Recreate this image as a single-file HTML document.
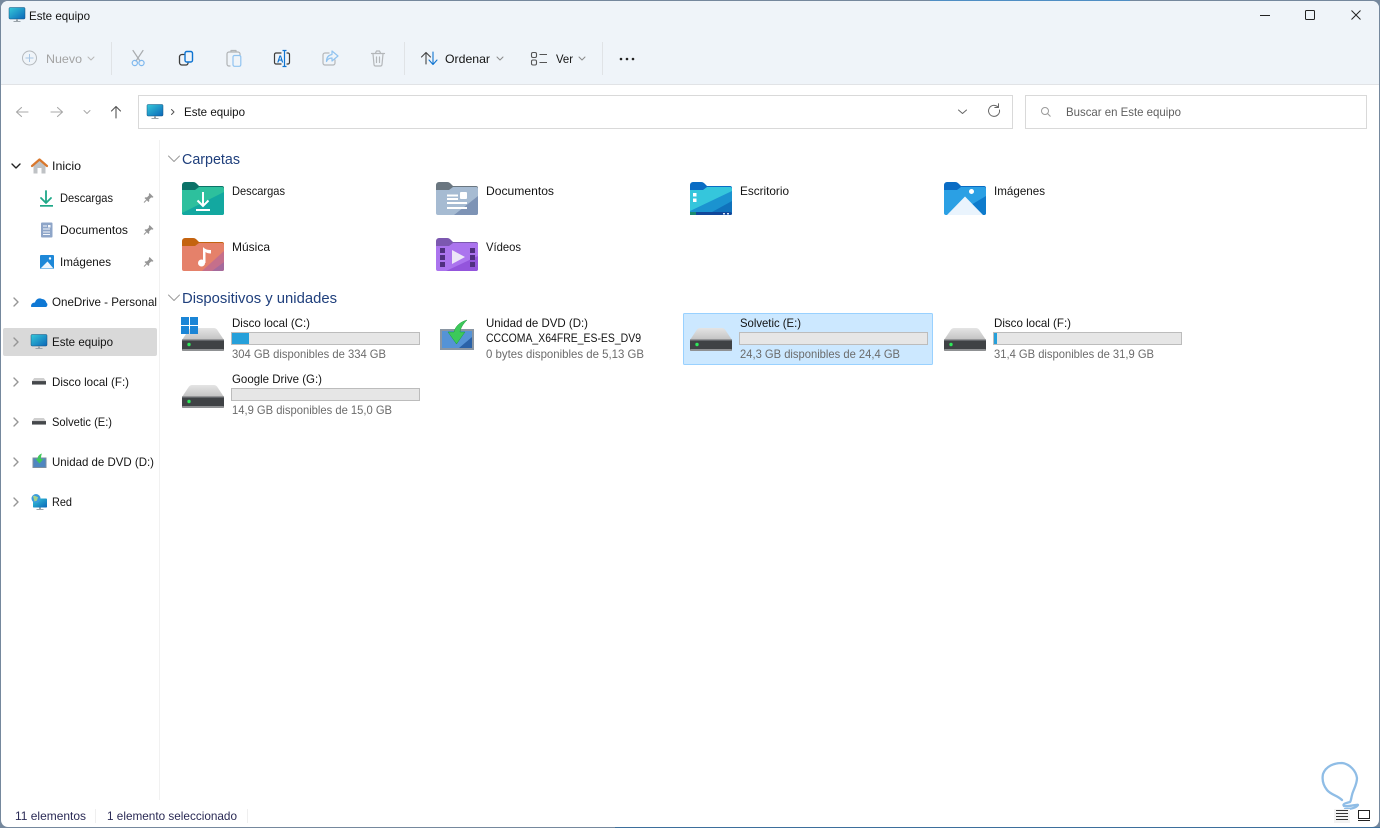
<!DOCTYPE html>
<html lang="es"><head><meta charset="utf-8"><title>Este equipo</title>
<style>
html,body{margin:0;padding:0;width:1380px;height:828px;overflow:hidden;background:#fff}
svg{display:block}
text{font-family:"Liberation Sans",sans-serif;font-size:12px;fill:#141414}
.s{fill:#6b6b6b}
.h{font-size:14.5px;fill:#1f3f7c}
.d{fill:#a3a3a3}
.i{fill:none;stroke-linecap:round;stroke-linejoin:round}
.bar{fill:#e6e6e6;stroke:#bcbcbc}
</style></head><body>
<svg xmlns="http://www.w3.org/2000/svg" width="1380" height="828" viewBox="0 0 1380 828">
<defs>
<linearGradient id="mon" x1="0" y1="0" x2="1" y2="1"><stop offset="0" stop-color="#35c9d9"/><stop offset="1" stop-color="#0b66b8"/></linearGradient>
<linearGradient id="top" x1="0" y1="0" x2="0" y2="1"><stop offset="0" stop-color="#e4e4e4"/><stop offset="1" stop-color="#c2c2c2"/></linearGradient>
<symbol id="monitor" viewBox="0 0 16 16" overflow="visible">
<rect x="0" y="0.5" width="16" height="11.5" rx="1" fill="url(#mon)" stroke="#17517f" stroke-width=".5"/>
<rect x="7" y="12" width="2" height="2.5" fill="#9aa3aa"/><rect x="4.5" y="14" width="7" height="1" fill="#9aa3aa"/>
</symbol>
<symbol id="drive" viewBox="0 0 42 23" overflow="visible">
<path d="M7 1.5C8 .5 9 0 10 0H32C33 0 34 .5 35 1.5L42 12H0Z" fill="url(#top)"/>
<rect x="0" y="11.500" width="42" height="11.500" rx="1.500" fill="#3f4245"/>
<rect x="0" y="11.500" width="42" height="1.500" fill="#63666a"/>
<rect x="0" y="21" width="42" height="2" rx="1" fill="#8f9193"/>
<circle cx="7" cy="16.500" r="1.700" fill="#2ee85a"/>
</symbol>
<symbol id="minidrive" viewBox="0 0 16 8" overflow="visible">
<path d="M2.500 0H13.500L16 3.500H0Z" fill="#cfcfcf"/><rect x="0" y="3.500" width="16" height="4" fill="#45484b"/>
</symbol>
<symbol id="chevR" viewBox="0 0 8 12" overflow="visible"><path class="i" d="M2 2L6 6L2 10" stroke="#969696" stroke-width="1.400"/></symbol>
<symbol id="pin" viewBox="0 0 10 10" overflow="visible">
<path d="M6 0L10 4L8.800 4.700L7.700 4.400L5.600 6.500L5.800 8L5 9L1 5L2 4.200L3.500 4.400L5.600 2.300L5.300 1.200Z" fill="#969696"/>
<path d="M3 7L.5 9.500" stroke="#969696"/>
</symbol>
</defs>

<!-- frame -->
<rect width="1380" height="828" fill="#75889d"/>
<rect x="930" y="0" width="200" height="1" fill="#4f8ec4"/>
<rect x="1" y="1" width="1378" height="826" rx="7" fill="#fff"/>
<path d="M1 84V8a7 7 0 0 1 7-7H1372a7 7 0 0 1 7 7V84Z" fill="#eff4f9"/>
<rect x="1" y="84" width="1378" height="1" fill="#e1e3e6"/>
<rect x="615" y="827" width="765" height="1" fill="#3d6f9c"/>

<!-- title -->
<use href="#monitor" x="9" y="7" width="16" height="16"/>
<text x="29" y="20" textLength="61" lengthAdjust="spacingAndGlyphs">Este equipo</text>
<path d="M1260 15.500H1270" stroke="#222" stroke-width="1"/>
<rect x="1305.500" y="10.500" width="9" height="9" rx="1" fill="none" stroke="#222"/>
<path d="M1351.500 10.500L1360.500 19.500M1360.500 10.500L1351.500 19.500" stroke="#222"/>

<!-- toolbar -->
<circle cx="29.500" cy="58" r="7" fill="none" stroke="#b4b8bc"/>
<path d="M29.500 54V62M25.500 58H33.500" stroke="#a9c6e4"/>
<text x="46" y="63" class="d" textLength="36" lengthAdjust="spacingAndGlyphs">Nuevo</text>
<path class="i" d="M88 57L91 60L94 57" stroke="#b8b8b8"/>
<rect x="111" y="42" width="1" height="33" fill="#e0e3e6"/>
<!-- cut -->
<path class="i" d="M133 50.500L140 61M143 50.500L136 61" stroke="#a9acaf" stroke-width="1.200"/>
<circle cx="134.800" cy="63" r="2.600" fill="none" stroke="#7fb8ee" stroke-width="1.200"/>
<circle cx="141.500" cy="63" r="2.600" fill="none" stroke="#7fb8ee" stroke-width="1.200"/>
<!-- copy -->
<path class="i" d="M184 54.500H182a2.500 2.500 0 0 0-2.500 2.500V62.500a2.500 2.500 0 0 0 2.500 2.500H186a2 2 0 0 0 2-2" stroke="#3c3c3c" stroke-width="1.300"/>
<rect x="185" y="51.500" width="7.500" height="10.500" rx="1.800" fill="#eff4f9" stroke="#0f74d1" stroke-width="1.400"/>
<!-- paste -->
<path class="i" d="M230 66H229a2 2 0 0 1-2-2V54a2 2 0 0 1 2-2H238a2 2 0 0 1 2 2V55M231 52V50.500H236V52" stroke="#b0b3b6" stroke-width="1.200"/>
<rect x="233" y="55.500" width="7.800" height="10.800" rx="1.500" fill="#eff4f9" stroke="#90c3f0" stroke-width="1.200"/>
<!-- rename -->
<path class="i" d="M281 53H276a1.500 1.500 0 0 0-1.500 1.500V62.500a1.500 1.500 0 0 0 1.500 1.500H281M287 53H288a1.500 1.500 0 0 1 1.500 1.500V62.500a1.500 1.500 0 0 1-1.500 1.500H287" stroke="#3c3c3c" stroke-width="1.200"/>
<path d="M284.500 50.500V66.500M282.500 50.500H286.500M282.500 66.500H286.500" stroke="#0f74d1" stroke-width="1.200"/>
<text x="277" y="62.500" style="font-size:10.500px;fill:#0f74d1;font-weight:bold" textLength="6.500" lengthAdjust="spacingAndGlyphs">A</text>
<!-- share -->
<path class="i" d="M329 53H325a2 2 0 0 0-2 2V63a2 2 0 0 0 2 2H333a2 2 0 0 0 2-2V60" stroke="#b4b7ba" stroke-width="1.200"/>
<path class="i" d="M332 51L338 56L332 61V58C329 58 327.500 59 326.500 61.500C326.500 57 329 55 332 54.500Z" fill="#eff4f9" stroke="#90c3f0" stroke-width="1.200"/>
<!-- delete -->
<path class="i" d="M371.500 53.500H384.500M375.500 53L376.500 51H379.500L380.500 53M373 54L374 64.500a1.500 1.500 0 0 0 1.500 1.500H380.500a1.500 1.500 0 0 0 1.500-1.500L383 54M376.500 57V62.500M379.500 57V62.500" stroke="#b4b7ba" stroke-width="1.200"/>
<rect x="404" y="42" width="1" height="33" fill="#e0e3e6"/>
<!-- sort -->
<path class="i" d="M426 64V52.500M421.500 57L426 52.500L430.500 57" stroke="#444" stroke-width="1.100"/>
<path class="i" d="M433 52V64M429 60L433 64.500L437 60" stroke="#0f74d1" stroke-width="1.100"/>
<text x="445" y="63" textLength="45" lengthAdjust="spacingAndGlyphs">Ordenar</text>
<path class="i" d="M497 57L500 60L503 57" stroke="#8a8a8a"/>
<!-- view -->
<rect x="531.500" y="52.500" width="5" height="5" rx="1.500" fill="none" stroke="#555" stroke-width="1.100"/>
<rect x="531.500" y="60" width="5" height="5" rx="1.500" fill="none" stroke="#555" stroke-width="1.100"/>
<path d="M539.500 54.500H547M539.500 62.500H547" stroke="#555" stroke-width="1.100"/>
<text x="556" y="63" textLength="17" lengthAdjust="spacingAndGlyphs">Ver</text>
<path class="i" d="M579 57L582 60L585 57" stroke="#8a8a8a"/>
<rect x="602" y="42" width="1" height="33" fill="#e0e3e6"/>
<circle cx="621" cy="59" r="1.300" fill="#222"/><circle cx="627" cy="59" r="1.300" fill="#222"/><circle cx="633" cy="59" r="1.300" fill="#222"/>

<!-- nav -->
<path class="i" d="M28 112H17M21.500 107.500L16.500 112L21.500 116.500" stroke="#a8a8a8" stroke-width="1.100"/>
<path class="i" d="M51 112H62M57.500 107.500L62.500 112L57.500 116.500" stroke="#a8a8a8" stroke-width="1.100"/>
<path class="i" d="M84 110.500L87 113.500L90 110.500" stroke="#a8a8a8"/>
<path class="i" d="M116 118V106.500M111.500 111L116 106.500L120.500 111" stroke="#555" stroke-width="1.100"/>

<!-- address -->
<rect x="138.500" y="95.500" width="874" height="33" fill="#fff" stroke="#d9d9d9"/>
<use href="#monitor" x="147" y="104" width="16" height="16"/>
<path class="i" d="M171.500 109.500L174 112L171.500 114.500" stroke="#555"/>
<text x="184" y="116" textLength="61" lengthAdjust="spacingAndGlyphs">Este equipo</text>
<path class="i" d="M958.500 110L962.500 113.500L966.500 110" stroke="#666"/>
<path class="i" d="M999.500 110A5.500 5.500 0 1 1 998 107M998.500 103.800V107.500H994.800" stroke="#666" stroke-width="1"/>
<rect x="1025.500" y="95.500" width="341" height="33" fill="#fff" stroke="#d9d9d9"/>
<circle cx="1045" cy="111" r="3.500" fill="none" stroke="#9a9a9a"/>
<path d="M1047.500 113.500L1050.500 116.500" stroke="#9a9a9a"/>
<text x="1066" y="116" style="fill:#5f5f5f" textLength="115" lengthAdjust="spacingAndGlyphs">Buscar en Este equipo</text>

<!-- sidebar -->
<rect x="159" y="140" width="1" height="660" fill="#f1f1f1"/>
<rect x="3" y="328" width="154" height="28" rx="2" fill="#d9d9d9"/>
<path class="i" d="M12 164L16 168L20 164" stroke="#222" stroke-width="1.400"/>
<!-- home -->
<path d="M33.500 165L39.500 160L45.500 165V173.500H41.500V168H37.500V173.500H33.500Z" fill="#bfc2c5"/>
<path class="i" d="M32 166L39.500 159.500L47 166" stroke="#d9772c" stroke-width="2.200"/>
<text x="52" y="170" textLength="29" lengthAdjust="spacingAndGlyphs">Inicio</text>

<path d="M46 191V202M41 198L46 203L51 198" class="i" stroke="#1fa888" stroke-width="1.800"/>
<rect x="40" y="205" width="13" height="1.700" fill="#1fa888"/>
<text x="60" y="202" textLength="53" lengthAdjust="spacingAndGlyphs">Descargas</text>
<use href="#pin" x="143.500" y="193" width="10" height="10"/>

<rect x="41" y="222.500" width="11.500" height="15" rx="1" fill="#8ea5c8"/>
<path d="M43 226H47M43 229H50M43 232H50M43 234.500H50" stroke="#f4f7fb"/>
<rect x="48" y="225" width="2.500" height="2.500" fill="#f4f7fb"/>
<text x="60" y="234" textLength="68" lengthAdjust="spacingAndGlyphs">Documentos</text>
<use href="#pin" x="143.500" y="225" width="10" height="10"/>

<rect x="40" y="255" width="14" height="14" rx="1" fill="#1e88d8"/>
<path d="M40.500 268.500L47.500 261.500L53.500 268.500Z" fill="#eef6fd"/>
<circle cx="50" cy="258.500" r="1.200" fill="#fff"/>
<text x="60" y="266" textLength="51" lengthAdjust="spacingAndGlyphs">Imágenes</text>
<use href="#pin" x="143.500" y="257" width="10" height="10"/>

<use href="#chevR" x="12" y="296" width="8" height="12"/>
<path d="M31 306.500C31 303.500 33 302.500 35 302.500C36 299 39 297.500 42 299C44.500 299 46 301 46.500 303C48 303.500 47.500 306.500 46 307H33C32 307 31 307 31 306.500Z" fill="#0f78d4"/>
<text x="52" y="306" textLength="105" lengthAdjust="spacingAndGlyphs">OneDrive - Personal</text>

<use href="#chevR" x="12" y="336" width="8" height="12"/>
<use href="#monitor" x="31" y="334" width="16" height="16"/>
<text x="52" y="346" textLength="61" lengthAdjust="spacingAndGlyphs">Este equipo</text>

<use href="#chevR" x="12" y="376" width="8" height="12"/>
<use href="#minidrive" x="32" y="378" width="14" height="7"/>
<text x="52" y="386" textLength="77" lengthAdjust="spacingAndGlyphs">Disco local (F:)</text>

<use href="#chevR" x="12" y="416" width="8" height="12"/>
<use href="#minidrive" x="32" y="418" width="14" height="7"/>
<text x="52" y="426" textLength="60" lengthAdjust="spacingAndGlyphs">Solvetic (E:)</text>

<use href="#chevR" x="12" y="456" width="8" height="12"/>
<rect x="33" y="458" width="13" height="9.500" fill="#4f86c0" stroke="#7d8ea0" stroke-width="1"/>
<path d="M42 453.500C39 454.500 37.500 456.500 37.500 459H35.500L39.500 463.500L43.500 459H41C41 457 41 455.500 42 453.500Z" fill="#3fc65a"/>
<text x="52" y="466" textLength="102" lengthAdjust="spacingAndGlyphs">Unidad de DVD (D:)</text>

<use href="#chevR" x="12" y="496" width="8" height="12"/>
<rect x="33" y="498.500" width="14" height="9" rx=".8" fill="url(#mon)"/>
<rect x="39" y="507.500" width="2" height="2" fill="#9aa3aa"/><rect x="36.500" y="509" width="7" height="1" fill="#9aa3aa"/>
<circle cx="36" cy="498.500" r="4.500" fill="#3b9bdc"/>
<path d="M33 496C35 495 36.500 497 38 497L37 500.500L34.500 501.500Z" fill="#a5d28c"/>
<text x="52" y="506" textLength="20" lengthAdjust="spacingAndGlyphs">Red</text>

<!-- Carpetas -->
<path class="i" d="M168.500 156L174 161.500L179.500 156" stroke="#9a9a9a" stroke-width="1"/>
<text x="182" y="164" class="h" textLength="58" lengthAdjust="spacingAndGlyphs">Carpetas</text>

<!-- Descargas folder -->
<g transform="translate(182 182)">
<path d="M0 3a3 3 0 0 1 3-3H11c2 0 3 1 4 2l2 2H40a2 2 0 0 1 2 2V10H0Z" fill="#0b7268"/>
<path d="M0 8H13L17 5H40a2 2 0 0 1 2 2V31a2 2 0 0 1-2 2H2a2 2 0 0 1-2-2Z" fill="#2dc09d"/>
<path d="M0 31L42 10V31a2 2 0 0 1-2 2H2a2 2 0 0 1-2-2Z" fill="#13a8a0"/>
<path d="M21 10V23M15.500 18.500L21 24L26.500 18.500" fill="none" stroke="#fff" stroke-width="2"/>
<rect x="14" y="27" width="14" height="2" fill="#fff"/>
</g>
<text x="232" y="195" textLength="53" lengthAdjust="spacingAndGlyphs">Descargas</text>

<!-- Documentos folder -->
<g transform="translate(436 182)">
<path d="M0 3a3 3 0 0 1 3-3H11c2 0 3 1 4 2l2 2H40a2 2 0 0 1 2 2V10H0Z" fill="#6a7680"/>
<path d="M0 8H13L17 5H40a2 2 0 0 1 2 2V31a2 2 0 0 1-2 2H2a2 2 0 0 1-2-2Z" fill="#a6bbd2"/>
<path d="M18 33L42 14V31a2 2 0 0 1-2 2Z" fill="#7d93b5"/>
<path d="M11 13.500H22M11 17H22M11 21H31M11 26H31" stroke="#fff" stroke-width="2"/>
<rect x="24" y="10" width="7" height="7" rx="1" fill="#fff"/>
</g>
<text x="486" y="195" textLength="68" lengthAdjust="spacingAndGlyphs">Documentos</text>

<!-- Escritorio folder -->
<g transform="translate(690 182)">
<path d="M0 3a3 3 0 0 1 3-3H11c2 0 3 1 4 2l2 2H40a2 2 0 0 1 2 2V10H0Z" fill="#0a6cc4"/>
<path d="M0 8H13L17 5H40a2 2 0 0 1 2 2V31a2 2 0 0 1-2 2H2a2 2 0 0 1-2-2Z" fill="#35c6dc"/>
<path d="M0 29L42 9V31a2 2 0 0 1-2 2H2a2 2 0 0 1-2-2Z" fill="#1b93d0"/>
<path d="M22 30L42 19V30Z" fill="#1072bc"/>
<rect x="0" y="30" width="42" height="3" rx="1.500" fill="#11479a"/>
<rect x="0" y="30" width="6" height="3" fill="#1a8a70"/>
<rect x="33" y="31" width="2" height="1.500" fill="#d8e8f8"/><rect x="37" y="31" width="2" height="1.500" fill="#d8e8f8"/>
<rect x="3" y="11" width="3.500" height="3.500" fill="#fff"/><rect x="3" y="16.500" width="3.500" height="3.500" fill="#fff"/>
</g>
<text x="740" y="195" textLength="49" lengthAdjust="spacingAndGlyphs">Escritorio</text>

<!-- Imagenes folder -->
<g transform="translate(944 182)">
<path d="M0 3a3 3 0 0 1 3-3H11c2 0 3 1 4 2l2 2H40a2 2 0 0 1 2 2V10H0Z" fill="#0a6cc4"/>
<path d="M0 8H13L17 5H40a2 2 0 0 1 2 2V31a2 2 0 0 1-2 2H2a2 2 0 0 1-2-2Z" fill="#2ba0e4"/>
<path d="M10 33L42 14V31a2 2 0 0 1-2 2Z" fill="#0e7bcc"/>
<path d="M3 33L21 14.500L39 33Z" fill="#eaf4fd"/>
<circle cx="27.500" cy="9.500" r="2.500" fill="#fff"/>
</g>
<text x="994" y="195" textLength="51" lengthAdjust="spacingAndGlyphs">Imágenes</text>

<!-- Musica folder -->
<g transform="translate(182 238)">
<path d="M0 3a3 3 0 0 1 3-3H11c2 0 3 1 4 2l2 2H40a2 2 0 0 1 2 2V10H0Z" fill="#c4630f"/>
<path d="M0 8H13L17 5H40a2 2 0 0 1 2 2V31a2 2 0 0 1-2 2H2a2 2 0 0 1-2-2Z" fill="#e5816a"/>
<path d="M20 33L42 13V31a2 2 0 0 1-2 2Z" fill="#c56f8b"/>
<path d="M30 33L42 24V31a2 2 0 0 1-2 2Z" fill="#a56a9c"/>
<circle cx="19.500" cy="25" r="3.500" fill="#fff"/>
<path d="M21 25V9C23 11.500 26 12 29 12V15.500C26.500 15.500 24.500 15 23.500 14V25Z" fill="#fff"/>
</g>
<text x="232" y="251" textLength="38" lengthAdjust="spacingAndGlyphs">Música</text>

<!-- Videos folder -->
<g transform="translate(436 238)">
<path d="M0 3a3 3 0 0 1 3-3H11c2 0 3 1 4 2l2 2H40a2 2 0 0 1 2 2V10H0Z" fill="#7c58b0"/>
<path d="M0 8H13L17 5H40a2 2 0 0 1 2 2V31a2 2 0 0 1-2 2H2a2 2 0 0 1-2-2Z" fill="#ab74ee"/>
<path d="M10 33L42 18V31a2 2 0 0 1-2 2Z" fill="#9355dc"/>
<g fill="#4f2f7f"><rect x="4" y="10" width="5" height="5"/><rect x="4" y="17" width="5" height="5"/><rect x="4" y="24" width="5" height="5"/><rect x="34" y="10" width="5" height="5"/><rect x="34" y="17" width="5" height="5"/><rect x="34" y="24" width="5" height="5"/></g>
<path d="M16 12L29 19L16 26Z" fill="#ece6f7"/>
</g>
<text x="486" y="251" textLength="35" lengthAdjust="spacingAndGlyphs">Vídeos</text>

<!-- Dispositivos -->
<path class="i" d="M168.500 295L174 300.500L179.500 295" stroke="#9a9a9a" stroke-width="1"/>
<text x="182" y="303" class="h" textLength="155" lengthAdjust="spacingAndGlyphs">Dispositivos y unidades</text>

<!-- C -->
<use href="#drive" x="182" y="328" width="42" height="23"/>
<g fill="#1b85d6"><rect x="181" y="317" width="8" height="8"/><rect x="190" y="317" width="8" height="8"/><rect x="181" y="326" width="8" height="8"/><rect x="190" y="326" width="8" height="8"/></g>
<text x="232" y="327" textLength="78" lengthAdjust="spacingAndGlyphs">Disco local (C:)</text>
<rect class="bar" x="231.500" y="332.500" width="188" height="12"/>
<rect x="232" y="333" width="17" height="11" fill="#26a0da"/>
<text x="232" y="358" class="s" textLength="154" lengthAdjust="spacingAndGlyphs">304 GB disponibles de 334 GB</text>

<!-- D -->
<rect x="441" y="330" width="32" height="19" fill="#5593d6" stroke="#8a96a3" stroke-width="2"/>
<path d="M459 348L472 337V348Z" fill="#2a62a8"/>
<path d="M467 320C460 322 455.500 326 454 332H448L456.500 344L465 332H460C460.500 328 463 324 467 320Z" fill="#3cc95a" stroke="#1f9a3c" stroke-width=".5"/>
<text x="486" y="327" textLength="102" lengthAdjust="spacingAndGlyphs">Unidad de DVD (D:)</text>
<text x="486" y="342" textLength="155" lengthAdjust="spacingAndGlyphs">CCCOMA_X64FRE_ES-ES_DV9</text>
<text x="486" y="358" class="s" textLength="158" lengthAdjust="spacingAndGlyphs">0 bytes disponibles de 5,13 GB</text>

<!-- E selected -->
<rect x="683.500" y="313.500" width="249" height="51" rx="1" fill="#cce8ff" stroke="#99d1ff"/>
<use href="#drive" x="690" y="328" width="42" height="23"/>
<text x="740" y="327" textLength="61" lengthAdjust="spacingAndGlyphs">Solvetic (E:)</text>
<rect class="bar" x="739.500" y="332.500" width="188" height="12"/>
<text x="740" y="358" class="s" textLength="160" lengthAdjust="spacingAndGlyphs">24,3 GB disponibles de 24,4 GB</text>

<!-- F -->
<use href="#drive" x="944" y="328" width="42" height="23"/>
<text x="994" y="327" textLength="77" lengthAdjust="spacingAndGlyphs">Disco local (F:)</text>
<rect class="bar" x="993.500" y="332.500" width="188" height="12"/>
<rect x="994" y="333" width="3" height="11" fill="#26a0da"/>
<text x="994" y="358" class="s" textLength="160" lengthAdjust="spacingAndGlyphs">31,4 GB disponibles de 31,9 GB</text>

<!-- G -->
<use href="#drive" x="182" y="385" width="42" height="23"/>
<text x="232" y="383" textLength="90" lengthAdjust="spacingAndGlyphs">Google Drive (G:)</text>
<rect class="bar" x="231.500" y="388.500" width="188" height="12"/>
<text x="232" y="414" class="s" textLength="160" lengthAdjust="spacingAndGlyphs">14,9 GB disponibles de 15,0 GB</text>

<!-- status -->
<text x="15" y="820" style="fill:#2a2a55" textLength="71" lengthAdjust="spacingAndGlyphs">11 elementos</text>
<rect x="95" y="809" width="1" height="14" fill="#efefef"/>
<text x="107" y="820" style="fill:#2a2a55" textLength="130" lengthAdjust="spacingAndGlyphs">1 elemento seleccionado</text>
<rect x="247" y="809" width="1" height="14" fill="#efefef"/>

<!-- watermark -->
<path class="i" d="M1342 800C1337 795 1331 795 1327 790C1323 785 1322 779 1323 774C1326 766 1334 763 1342 763C1350 764 1356 771 1357 778C1357 785 1353 790 1352 795C1351 799 1351 801 1350 802C1346 803 1342 804 1344 806C1348 807 1358 804 1358 805C1356 808 1350 809 1345 809" stroke="#8fbde6" stroke-width="2.300"/>
<rect x="1334" y="809" width="16" height="14" fill="#f3f3f3"/>
<path d="M1336 810.500H1348M1336 813.500H1348M1336 816.500H1348M1336 819.500H1348" stroke="#333" stroke-width=".9"/>
<rect x="1358.500" y="810.500" width="11" height="8" fill="none" stroke="#222"/>
<path d="M1358 820.500H1370" stroke="#222"/>
</svg>
</body></html>
